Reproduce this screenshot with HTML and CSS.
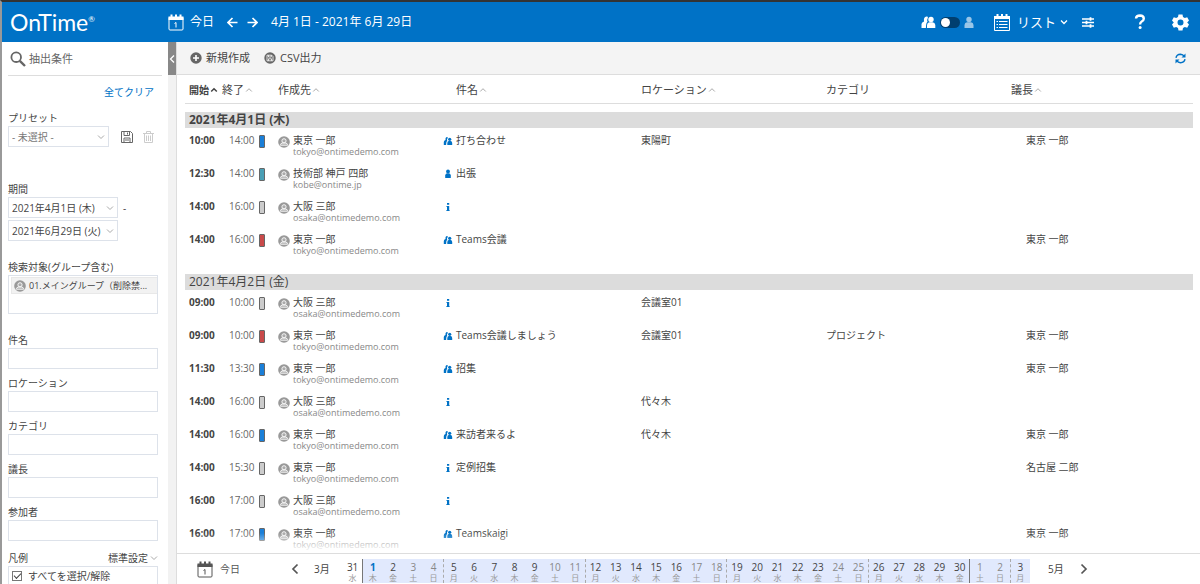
FILE: index.html
```html
<!DOCTYPE html>
<html lang="ja">
<head>
<meta charset="utf-8">
<title>OnTime</title>
<link rel="stylesheet" href="styles.css">
</head>
<body>
<svg class="sprite" aria-hidden="true">
  <symbol id="i-avatar" viewBox="0 0 12 12"><circle cx="6" cy="6" r="5.8" fill="#999"/><circle cx="6" cy="4.8" r="2.1" fill="#aaa" stroke="#fff" stroke-width=".9"/><path d="M2.4 9.2V8.6Q2.6 7.2 4.4 7.1H7.6Q9.4 7.2 9.6 8.6V9.2Z" fill="#aaa" stroke="#fff" stroke-width=".9"/></symbol>
  <symbol id="i-person" viewBox="0 0 8 10"><circle cx="4" cy="2.4" r="1.9"/><path d="M1.2 9V6.6Q1.4 4.4 3 4.3H5Q6.600 4.400 6.800 6.600V9Z"/></symbol>
  <symbol id="i-group" viewBox="0 0 10 10"><circle cx="6.700" cy="3.300" r="1.600"/><path d="M4.300 9V7Q4.500 5 5.800 4.900H7.600Q9 5 9.200 7V9Z"/><path d="M3.700 1Q4.900.8 4.800 2.100 3.500 3.300 4.200 4.500 3.100 5.500 3.100 9H.8V6Q.9 4.300 2.500 4 2.100 1.400 3.700 1Z"/></symbol>
  <symbol id="i-info" viewBox="0 0 8 10"><path d="M3 1H5.200V2.800H3ZM2.500 4H5.200V8H5.600V9H2.400V8H3V5H2.500Z"/></symbol>
  <symbol id="i-down" viewBox="0 0 8 8"><path d="M1 2.500 4 5.500 7 2.500" fill="none" stroke="currentColor"/></symbol>
  <symbol id="i-up" viewBox="0 0 8 8"><path d="M1.200 5.500 4 2.700 6.800 5.500" fill="none" stroke="currentColor"/></symbol>
  <symbol id="i-cal" viewBox="0 0 16 17"><path d="M1 3.500H15V15Q15 16 14 16H2Q1 16 1 15Z" fill="none" stroke="currentColor"/><path d="M.5 2.500H2.500V.5H4.500V2.500H7V.5H9V2.500H11.500V.5H13.500V2.500H15.500V6H.5Z" fill="currentColor"/><path d="M6.500 9.500 8 8.500V13.500" fill="none" stroke="currentColor"/></symbol>
</svg>

<div class="app">
<header class="topbar">
  <div class="brand">OnTime<sup>®</sup></div>
  <div class="period">
    <button class="today"><svg width="16" height="17"><use href="#i-cal"/></svg>今日</button>
    <button aria-label="前へ"><svg width="11" height="11" viewBox="0 0 11 11"><path d="M10.500 5.500H1.500M5.500 1 1 5.500 5.500 10" fill="none" stroke="currentColor" stroke-width="1.700"/></svg></button>
    <button aria-label="次へ"><svg width="11" height="11" viewBox="0 0 11 11"><path d="M.5 5.500H9.500M5.500 1 10 5.500 5.500 10" fill="none" stroke="currentColor" stroke-width="1.700"/></svg></button>
    <span class="range">4月 1日 - 2021年 6月 29日</span>
  </div>
  <div class="tools">
    <div class="scope">
      <svg width="15" height="13" viewBox="0 0 15 13" fill="#fff"><circle cx="10" cy="3.500" r="2.700"/><path d="M6 12V9Q6.200 6.500 8.500 6.300H11.500Q14 6.500 14.300 9V12Z"/><path d="M5.500.5Q7.200.3 6.900 1.800 5.600 4 6.500 5.800 5 6.800 4.900 12H.5V8Q.8 6 3 5.400 2.300 1.200 5.500.5Z"/></svg>
      <button class="switch" role="switch" aria-checked="false" aria-label="表示対象"></button>
      <svg class="dim" width="10" height="13" viewBox="0 0 10 13" fill="#fff"><circle cx="5" cy="3.500" r="2.700"/><path d="M.5 12V9Q.8 6.500 3 6.300H7Q9.200 6.500 9.500 9V12Z"/></svg>
    </div>
    <button class="view"><svg width="18" height="19" viewBox="0 0 18 19"><path d="M1.500 3.500H16.500V17.500H1.500Z" fill="none" stroke="#fff"/><path d="M1 3H3.500V1H5.500V3H8V1H10V3H12.500V1H14.500V3H17V6H1Z" fill="#fff"/><path d="M3.500 8.500H5M6 8.500H14.500M3.500 11.500H5M6 11.500H14.500M3.500 14.500H5M6 14.500H14.500" stroke="#fff" stroke-width="1.200"/></svg>リスト<svg width="8" height="8"><use href="#i-down" stroke-width="1.300"/></svg></button>
    <button class="filter" aria-label="表示設定"><svg width="12" height="11" viewBox="0 0 12 11"><path d="M0 2H12M0 5.500H12M0 9H12" stroke="#fff" stroke-width="1.300"/><path d="M8.500.3V3.700M4.500 3.800V7.200M8.500 7.300V10.700" stroke="#fff" stroke-width="1.800"/></svg></button>
    <button class="help" aria-label="ヘルプ"><svg width="12" height="16" viewBox="0 0 12 16"><path d="M2 4.500Q2.200 1.500 6 1.500 9.800 1.700 9.800 4.700 9.700 6.400 7.700 7.500 6.100 8.400 6.100 10.500" fill="none" stroke="#fff" stroke-width="2.400"/><circle cx="6.100" cy="13.600" r="1.500" fill="#fff"/></svg></button>
    <button aria-label="設定"><svg width="17" height="17" viewBox="0 0 17 17"><path fill="#fff" fill-rule="evenodd" d="M6.500.5H10.500L11 3 12.800 4 15.200 3.200 17 6.400 15.200 8.500 17 10.600 15.200 13.800 12.800 13 11 14 10.500 16.500H6.500L6 14 4.200 13 1.800 13.800 0 10.600 1.800 8.500 0 6.400 1.800 3.200 4.200 4 6 3ZM8.500 5.500A3 3 0 1 0 8.500 11.500 3 3 0 1 0 8.500 5.500Z"/></svg></button>
  </div>
</header>

<div class="body">
<aside class="sidebar">
  <h2><svg width="16" height="16" viewBox="0 0 16 16"><circle cx="6.200" cy="6.200" r="4.800" fill="none" stroke="#666" stroke-width="1.800"/><path d="M9.800 9.800 15 15" stroke="#666" stroke-width="2.400"/></svg>抽出条件</h2>
  <a class="clear" href="#">全てクリア</a>
  <div class="field preset">
    <label for="preset">プリセット</label>
    <div class="line">
      <span class="pick short"><select id="preset"><option>- 未選択 -</option></select><svg width="8" height="8"><use href="#i-down"/></svg></span>
      <button aria-label="保存"><svg width="12" height="12" viewBox="0 0 12 12" fill="none" stroke="#666"><path d="M.5.5H9.500L11.500 2.500V11.500H.5ZM3 .5V4.500H8.500V.5M3 11.500V7H9V11.500M4 9H8M6.500 1.500V3.500"/></svg></button>
      <button aria-label="削除"><svg width="11" height="12" viewBox="0 0 11 12" fill="none" stroke="#ccc"><path d="M0 2.500H11M3.500 2.500V.5H7.500V2.500M1.500 2.500V11.500H9.500V2.500M3.500 4.500V10M5.500 4.500V10M7.500 4.500V10"/></svg></button>
    </div>
  </div>
  <div class="field dates">
    <label for="from">期間</label>
    <div class="line"><span class="pick"><select id="from"><option>2021年4月1日 (木)</option></select><svg width="8" height="8"><use href="#i-down"/></svg></span>-</div>
    <span class="pick"><select aria-label="終了日"><option>2021年6月29日 (火)</option></select><svg width="8" height="8"><use href="#i-down"/></svg></span>
  </div>
  <div class="field target">
    <span class="label">検索対象(グループ含む)</span>
    <div class="chips"><div class="chip"><svg width="12" height="12"><use href="#i-avatar"/></svg><span>01.メイングループ（削除禁...</span></div></div>
  </div>
  <div class="field"><label for="subject">件名</label><input id="subject" type="text"></div>
  <div class="field"><label for="place">ロケーション</label><input id="place" type="text"></div>
  <div class="field"><label for="category">カテゴリ</label><input id="category" type="text"></div>
  <div class="field"><label for="chair">議長</label><input id="chair" type="text"></div>
  <div class="field"><label for="member">参加者</label><input id="member" type="text"></div>
  <div class="legend">
    <div class="legend-head"><span>凡例</span><button>標準設定<svg width="8" height="8"><use href="#i-down"/></svg></button></div>
    <div class="legend-box"><label><input type="checkbox" checked>すべてを選択/解除</label></div>
  </div>
</aside>
<div class="gutter"><button aria-label="サイドバーを閉じる"><svg width="6" height="10" viewBox="0 0 6 10"><path d="M5 1.500 1.500 5 5 8.500" fill="none" stroke="#fff" stroke-width="1.300"/></svg></button></div>

<main class="content">
  <div class="actions">
    <button><svg width="12" height="12" viewBox="0 0 12 12"><circle cx="6" cy="6" r="5.700" fill="#666"/><path d="M6 3V9M3 6H9" stroke="#fff" stroke-width="1.600"/></svg>新規作成</button>
    <button><svg width="12" height="12" viewBox="0 0 12 12"><circle cx="6" cy="6" r="5.700" fill="#666"/><path d="M3 3.200H7.700L9 4.500V8.800H3ZM4.500 3.200V5H7.300V3.200M4.500 8.800V6.800H7.500V8.800" fill="none" stroke="#fff" stroke-width=".8"/></svg>CSV出力</button>
    <button class="reload" aria-label="更新"><svg width="11" height="11" viewBox="0 0 11 11"><path d="M1 4.800Q1.500 1.500 5.500 1.300 7.800 1.400 9.500 3.500M10 6.200Q9.500 9.500 5.500 9.700 3.200 9.600 1.500 7.500" fill="none" stroke="#0072c6" stroke-width="1.400"/><path d="M10.500.5V4.500H6.500ZM.5 10.500V6.500H4.500Z" fill="#0072c6"/></svg></button>
  </div>
  <div class="list">
  <table>
    <colgroup><col class="c-start"><col class="c-end"><col class="c-owner"><col class="c-subject"><col class="c-place"><col class="c-place"><col class="c-chair"></colgroup>
    <thead><tr>
      <th class="sorted">開始<svg width="8" height="8"><use href="#i-up" stroke-width="1.500"/></svg></th>
      <th>終了<svg width="8" height="8"><use href="#i-up"/></svg></th>
      <th>作成先<svg width="8" height="8"><use href="#i-up"/></svg></th>
      <th class="subject">件名<svg width="8" height="8"><use href="#i-up"/></svg></th>
      <th>ロケーション<svg width="8" height="8"><use href="#i-up"/></svg></th>
      <th>カテゴリ</th>
      <th>議長<svg width="8" height="8"><use href="#i-up"/></svg></th>
    </tr></thead>
    <tbody class="day">
      <tr><th colspan="7" class="date"><div class="now">2021年4月1日 (木)</div></th></tr>
      <tr><td>10:00</td><td><div class="end">14:00<i class="blue"></i></div></td><td><div class="owner"><svg width="12" height="12"><use href="#i-avatar"/></svg><div>東京 一郎<small>tokyo@ontimedemo.com</small></div></div></td><td><div class="title"><svg width="10" height="10"><use href="#i-group"/></svg>打ち合わせ</div></td><td>東陽町</td><td></td><td>東京 一郎</td></tr>
      <tr><td>12:30</td><td><div class="end">14:00<i class="teal"></i></div></td><td><div class="owner"><svg width="12" height="12"><use href="#i-avatar"/></svg><div>技術部 神戸 四郎<small>kobe@ontime.jp</small></div></div></td><td><div class="title"><svg width="10" height="10"><use href="#i-person"/></svg>出張</div></td><td></td><td></td><td></td></tr>
      <tr><td>14:00</td><td><div class="end">16:00<i class="gray"></i></div></td><td><div class="owner"><svg width="12" height="12"><use href="#i-avatar"/></svg><div>大阪 三郎<small>osaka@ontimedemo.com</small></div></div></td><td><div class="title"><svg width="10" height="10"><use href="#i-info"/></svg></div></td><td></td><td></td><td></td></tr>
      <tr><td>14:00</td><td><div class="end">16:00<i class="red"></i></div></td><td><div class="owner"><svg width="12" height="12"><use href="#i-avatar"/></svg><div>東京 一郎<small>tokyo@ontimedemo.com</small></div></div></td><td><div class="title"><svg width="10" height="10"><use href="#i-group"/></svg>Teams会議</div></td><td></td><td></td><td>東京 一郎</td></tr>
    </tbody>
    <tbody class="day">
      <tr><th colspan="7" class="date"><div>2021年4月2日 (金)</div></th></tr>
      <tr><td>09:00</td><td><div class="end">10:00<i class="gray"></i></div></td><td><div class="owner"><svg width="12" height="12"><use href="#i-avatar"/></svg><div>大阪 三郎<small>osaka@ontimedemo.com</small></div></div></td><td><div class="title"><svg width="10" height="10"><use href="#i-info"/></svg></div></td><td>会議室01</td><td></td><td></td></tr>
      <tr><td>09:00</td><td><div class="end">10:00<i class="red"></i></div></td><td><div class="owner"><svg width="12" height="12"><use href="#i-avatar"/></svg><div>東京 一郎<small>tokyo@ontimedemo.com</small></div></div></td><td><div class="title"><svg width="10" height="10"><use href="#i-group"/></svg>Teams会議しましょう</div></td><td>会議室01</td><td>プロジェクト</td><td>東京 一郎</td></tr>
      <tr><td>11:30</td><td><div class="end">13:30<i class="blue"></i></div></td><td><div class="owner"><svg width="12" height="12"><use href="#i-avatar"/></svg><div>東京 一郎<small>tokyo@ontimedemo.com</small></div></div></td><td><div class="title"><svg width="10" height="10"><use href="#i-group"/></svg>招集</div></td><td></td><td></td><td>東京 一郎</td></tr>
      <tr><td>14:00</td><td><div class="end">16:00<i class="gray"></i></div></td><td><div class="owner"><svg width="12" height="12"><use href="#i-avatar"/></svg><div>大阪 三郎<small>osaka@ontimedemo.com</small></div></div></td><td><div class="title"><svg width="10" height="10"><use href="#i-info"/></svg></div></td><td>代々木</td><td></td><td></td></tr>
      <tr><td>14:00</td><td><div class="end">16:00<i class="blue"></i></div></td><td><div class="owner"><svg width="12" height="12"><use href="#i-avatar"/></svg><div>東京 一郎<small>tokyo@ontimedemo.com</small></div></div></td><td><div class="title"><svg width="10" height="10"><use href="#i-group"/></svg>来訪者来るよ</div></td><td>代々木</td><td></td><td>東京 一郎</td></tr>
      <tr><td>14:00</td><td><div class="end">15:30<i class="gray"></i></div></td><td><div class="owner"><svg width="12" height="12"><use href="#i-avatar"/></svg><div>東京 一郎<small>tokyo@ontimedemo.com</small></div></div></td><td><div class="title"><svg width="10" height="10"><use href="#i-info"/></svg>定例招集</div></td><td></td><td></td><td>名古屋 二郎</td></tr>
      <tr><td>16:00</td><td><div class="end">17:00<i class="gray"></i></div></td><td><div class="owner"><svg width="12" height="12"><use href="#i-avatar"/></svg><div>大阪 三郎<small>osaka@ontimedemo.com</small></div></div></td><td><div class="title"><svg width="10" height="10"><use href="#i-info"/></svg></div></td><td></td><td></td><td></td></tr>
      <tr><td>16:00</td><td><div class="end">17:00<i class="blue"></i></div></td><td><div class="owner"><svg width="12" height="12"><use href="#i-avatar"/></svg><div>東京 一郎<small>tokyo@ontimedemo.com</small></div></div></td><td><div class="title"><svg width="10" height="10"><use href="#i-group"/></svg>Teamskaigi</div></td><td></td><td></td><td>東京 一郎</td></tr>
    </tbody>
  </table>
  </div>
  <nav class="timeline">
    <button class="goto"><svg width="16" height="17"><use href="#i-cal"/></svg>今日</button>
    <button aria-label="前の月"><svg width="8" height="12" viewBox="0 0 8 12"><path d="M6.500 1.500 2 6 6.500 10.500" fill="none" stroke="#555" stroke-width="1.700"/></svg></button>
    <span class="month">3月</span>
    <ol class="days">
      <li class="out">31<small>水</small></li>
      <li class="first cur">1<small>木</small></li><li>2<small>金</small></li><li class="off">3<small>土</small></li><li class="off">4<small>日</small></li>
      <li class="mon">5<small>月</small></li><li>6<small>火</small></li><li>7<small>水</small></li><li>8<small>木</small></li><li>9<small>金</small></li><li class="off">10<small>土</small></li><li class="off">11<small>日</small></li>
      <li class="mon">12<small>月</small></li><li>13<small>火</small></li><li>14<small>水</small></li><li>15<small>木</small></li><li>16<small>金</small></li><li class="off">17<small>土</small></li><li class="off">18<small>日</small></li>
      <li class="mon">19<small>月</small></li><li>20<small>火</small></li><li>21<small>水</small></li><li>22<small>木</small></li><li>23<small>金</small></li><li class="off">24<small>土</small></li><li class="off">25<small>日</small></li>
      <li class="mon">26<small>月</small></li><li>27<small>火</small></li><li>28<small>水</small></li><li>29<small>木</small></li><li>30<small>金</small></li><li class="first off">1<small>土</small></li><li class="off">2<small>日</small></li>
      <li class="mon">3<small>月</small></li>
    </ol>
    <span class="month">5月</span>
    <button aria-label="次の月"><svg width="8" height="12" viewBox="0 0 8 12"><path d="M1.500 1.500 6 6 1.500 10.500" fill="none" stroke="#555" stroke-width="1.700"/></svg></button>
  </nav>
</main>
</div>
</div>
</body>
</html>
```
FILE: styles.css
```css
* { box-sizing: border-box; }
body {
  margin: 0;
  color: #444;
  background: #fff;
  font: 10px/14px "Open Sans", "Noto Sans CJK JP", sans-serif;
}
button, input, select { font: inherit; color: inherit; }
button { display: flex; align-items: center; padding: 0; border: 0; background: none; }
svg { flex: none; display: block; }
.sprite { position: absolute; width: 0; height: 0; }
.app {
  display: flex;
  flex-direction: column;
  height: 100vh;
  overflow: hidden;
  border-top: 2px solid #333;
  border-left: 2px solid #999;
}

.topbar {
  flex: none;
  display: flex;
  align-items: center;
  height: 40px;
  padding-right: 11px;
  background: #0072c6;
  color: #fff;
}
.brand { width: 166px; padding-left: 8px; font: 23px/28px Lato, sans-serif; white-space: nowrap; }
.brand sup { font-size: 8px; line-height: 8px; vertical-align: 9px; }
.period { display: flex; align-items: center; gap: 9px; font-size: 12px; line-height: 20px; }
.today { gap: 6px; margin-right: 4px; }
.range { margin-left: 4px; white-space: nowrap; }
.tools { display: flex; align-items: center; margin-left: auto; }
.scope { display: flex; align-items: center; gap: 4px; margin-right: 19px; }
.switch { width: 20px; height: 11px; padding: 1px; border-radius: 6px; background: #003f70; }
.switch::before { content: ""; width: 9px; height: 9px; border-radius: 50%; background: #fff; }
.dim { opacity: .6; }
.view { gap: 4px; margin-right: 14px; font-size: 13px; line-height: 20px; }
.view svg:first-child { margin-right: 2px; }
.filter { margin-right: 40px; }
.help { margin-right: 26px; }

.body { flex: 1; display: flex; min-height: 0; }
.sidebar { flex: none; width: 166px; padding: 0 6px; overflow: hidden; }
.sidebar h2 {
  display: flex;
  align-items: center;
  gap: 3px;
  height: 34px;
  margin: 0;
  padding-left: 2px;
  border-bottom: 1px solid #ddd;
  color: #666;
  font-size: 11px;
  font-weight: 400;
}
.clear { display: block; margin: 9px 8px 12px; text-align: right; color: #0072c6; text-decoration: none; }
.field { width: 150px; margin-bottom: 7px; }
.field > label, .label { display: block; line-height: 15px; white-space: nowrap; }
.field > input, .pick {
  display: block;
  width: 100%;
  height: 21px;
  border: 1px solid #dde2ea;
  background: #fff;
}
.line { display: flex; align-items: center; gap: 5px; }
.pick { display: flex; align-items: center; width: 110px; padding-right: 3px; color: #aaa; }
.short { width: 101px; }
.pick select {
  flex: 1;
  min-width: 0;
  height: 19px;
  padding: 0 0 0 3px;
  border: 0;
  appearance: none;
  background: none;
  color: #444;
}
.short select { color: #777; }
.preset { margin-bottom: 35px; }
.preset .line { gap: 10px; }
.preset .line button:first-of-type { margin-left: 2px; }
.dates { margin-bottom: 19px; }
.dates .line { margin-bottom: 2px; }
.target { margin-bottom: 19px; }
.chips { height: 39px; padding: 1px 0 0 2px; border: 1px solid #dde2ea; }
.chip {
  display: flex;
  align-items: center;
  gap: 3px;
  height: 17px;
  padding-left: 2px;
  border: 1px solid #e8e8e8;
  border-right: 0;
  background: #f2f2f2;
  font-size: 9px;
  white-space: nowrap;
}
.legend { width: 150px; margin-top: 9px; }
.legend-head { display: flex; justify-content: space-between; line-height: 16px; }
.legend-head svg { margin-left: 2px; color: #aaa; }
.legend-box { height: 60px; padding: 2px 3px; border: 1px solid #dde2ea; }
.legend-box label { display: flex; align-items: center; gap: 6px; }
.legend-box input {
  width: 10px;
  height: 10px;
  margin: 0;
  border: 1px solid #777;
  appearance: none;
  background: #fff;
}
.legend-box input:checked::before {
  content: "";
  display: block;
  width: 6px;
  height: 3px;
  margin: 1px;
  border: solid #444;
  border-width: 0 0 1px 1px;
  transform: rotate(-45deg);
}

.gutter { flex: none; width: 9px; border-right: 1px solid #ddd; background: #f2f2f2; }
.gutter button { justify-content: center; width: 8px; height: 33px; background: #888; }

.content { flex: 1; display: flex; flex-direction: column; min-width: 0; }
.actions {
  flex: none;
  display: flex;
  align-items: center;
  gap: 14px;
  height: 33px;
  padding: 0 14px 0 13px;
  border-bottom: 1px solid #ddd;
  background: #f4f4f4;
  font-size: 11px;
}
.actions button { gap: 4px; }
.actions .reload { margin-left: auto; }

.list { position: relative; flex: 1; min-height: 0; padding: 0 7px 0 8px; overflow: hidden; }
.list::after {
  content: "";
  position: absolute;
  right: 0;
  bottom: 0;
  left: 0;
  height: 20px;
  background: linear-gradient(#fff0, #fff);
}
table { width: 100%; table-layout: fixed; border-collapse: collapse; }
.c-start { width: 37px; }
.c-end { width: 56px; }
.c-owner { width: 163px; }
.c-subject { width: 200px; }
.c-place { width: 185px; }
.c-chair { width: 182px; }
thead th {
  height: 28px;
  padding: 3px 0 0;
  border-bottom: 1px solid #ddd;
  font-size: 11px;
  font-weight: 400;
  text-align: left;
  white-space: nowrap;
}
thead svg { display: inline-block; margin-left: 1px; color: #aaa; }
thead .sorted { padding-left: 4px; font-size: 10px; font-weight: 700; }
.sorted svg { color: #444; }
thead .subject { padding-left: 15px; }
.date { padding: 8px 0 0; text-align: left; }
.day + .day .date { padding-top: 14px; }
.date div { height: 16px; padding-left: 4px; background: #dcdcdc; font-size: 12px; line-height: 16px; font-weight: 400; }
.date .now { font-weight: 700; }
td { height: 33px; padding: 5px 0 0; vertical-align: top; white-space: nowrap; }
td:first-child { padding-left: 4px; font-weight: 700; }
td:last-child { padding-left: 15px; }
.end { display: flex; gap: 4px; padding-left: 7px; color: #666; }
.end i { width: 6px; height: 13px; margin-top: 2px; border: 1px solid; border-radius: 1px; }
.blue { background: #1a7fd8; border-color: #0b5aa8; }
.teal { background: #4a9fb5; border-color: #2f7d90; }
.gray { background: #ccc; border-color: #999; }
.red { background: #c94a4a; border-color: #9c2f2f; }
.owner { display: flex; gap: 3px; }
.owner svg { margin-top: 3px; }
.owner small { display: block; color: #888; font-size: 9px; line-height: 10px; }
.title { display: flex; gap: 3px; padding-left: 2px; fill: #0072c6; }
.title svg { margin-top: 3px; }

.timeline {
  flex: none;
  display: flex;
  align-items: center;
  height: 31px;
  padding: 0 112px 0 20px;
  border-top: 1px solid #ddd;
}
.goto { gap: 7px; margin-right: 51px; color: #555; }
.month { width: 28px; margin-left: 15px; white-space: nowrap; }
.days + .month { width: 15px; margin: 0 17px 0 18px; }
.days {
  flex: 1;
  display: flex;
  align-self: flex-end;
  margin: 0 0 1px;
  padding: 0;
  list-style: none;
  text-align: center;
}
.days li {
  flex: 1 1 0;
  min-width: 0;
  height: 24px;
  padding-top: 3px;
  border-left: 1px solid transparent;
  background: #e1e9fd;
  line-height: 11px;
  font-weight: 500;
}
.days small { display: block; color: #999; font-size: 8px; line-height: 10px; font-weight: 400; }
.days .out { background: none; }
.days .off { color: #888; font-weight: 400; }
.days .cur { color: #0072c6; font-weight: 700; }
.days .mon { border-left: 1px dashed #aaa; }
.days .first { border-left: 1px solid #777; }
```
